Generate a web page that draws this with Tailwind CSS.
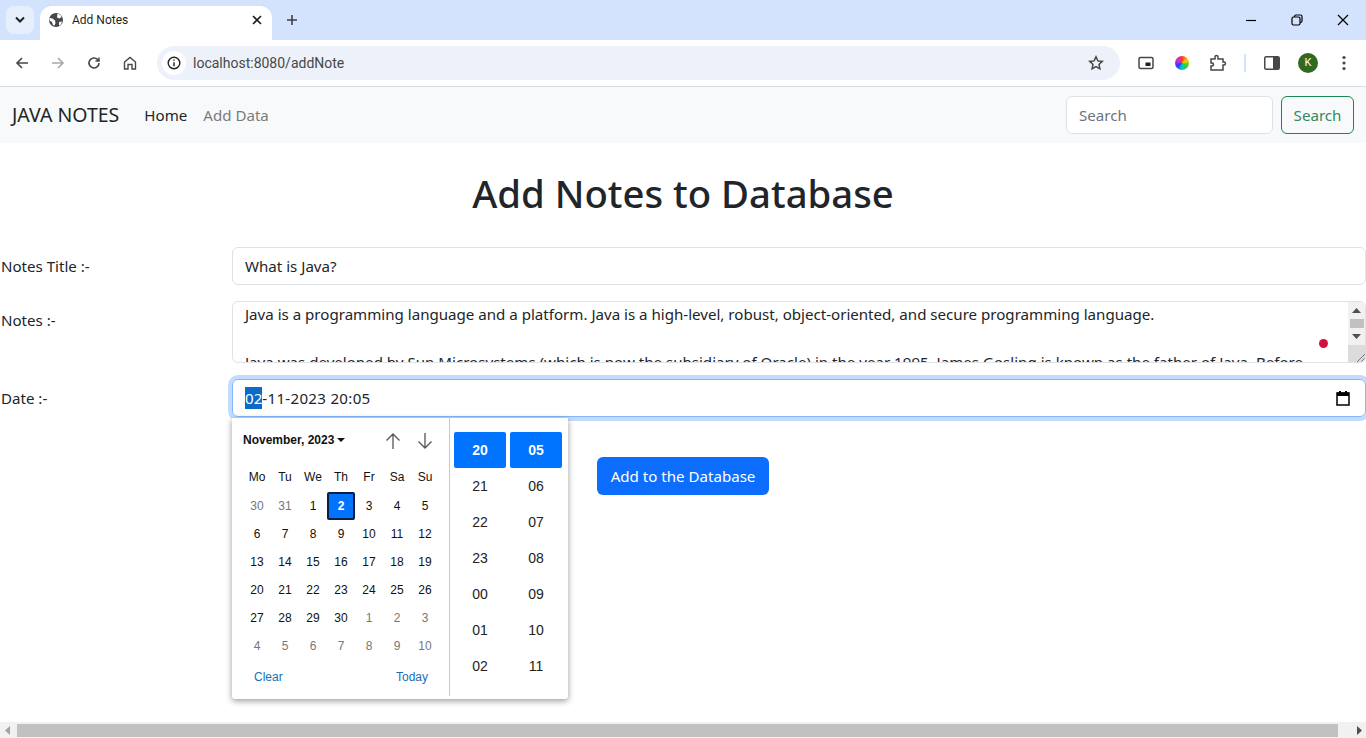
<!DOCTYPE html>
<html lang="en">
<head>
  <meta charset="UTF-8" />
  <meta name="viewport" content="width=device-width, initial-scale=1.0"/>
  <title>Add Notes</title>
  <script src="https://cdn.jsdelivr.net/npm/@tailwindcss/browser@4"></script>
</head>
<body class="h-[738px] overflow-hidden bg-white text-[15.100px] text-[#212529] font-['Noto_Sans',sans-serif]">
  <div class="flex h-[738px] flex-col">

    <!-- tab strip -->
    <div class="flex h-10 items-end bg-[#d3e3fd]">
      <div class="ml-[6px] mb-[6px] flex h-7 w-7 items-center justify-center rounded-lg bg-[#e7effd]">
        <svg width="12" height="8" viewBox="0 0 12 8" fill="none" stroke="#1f1f1f" stroke-width="2"><path d="M2 1.500l4 4 4-4"/></svg>
      </div>
      <div class="ml-[6px] flex h-[34px] w-[232px] items-center rounded-t-xl bg-white pr-[10px] pb-[6px] pl-[9px]">
        <svg width="14" height="14" viewBox="0 0 14 14"><circle cx="7" cy="7" r="7" fill="#45474a"/><path d="M8.500.5l3 1.500 1 2-2 1.500L8 4.500zM.5 5l3 .5 2.500 2 .5 2.500-1 2.500-1.500-.5L3 9 .5 7.500zM10 9l3-.5-1 3-2 1z" fill="#fff"/></svg>
        <span class="ml-[9px] flex-1 font-['Roboto',sans-serif] text-xs text-[#1f1f1f]">Add Notes</span>
        <svg width="10" height="10" viewBox="0 0 10 10" stroke="#1f1f1f" stroke-width="1.600"><path d="M1 1l8 8M9 1l-8 8"/></svg>
      </div>
      <svg class="mb-[14px] ml-[14px]" width="12" height="12" viewBox="0 0 12 12" stroke="#3c4043" stroke-width="1.600"><path d="M6 1v10M1 6h10"/></svg>
      <div class="mb-[14px] ml-auto flex items-center">
        <svg width="12" height="12" viewBox="0 0 12 12" stroke="#000" stroke-width="1.200"><path d="M1 6.500h10"/></svg>
        <svg class="ml-[34px]" width="12" height="12" viewBox="0 0 12 12" fill="none" stroke="#000" stroke-width="1.200"><rect x="1" y="3" width="8" height="8" rx="1.500"/><path d="M3.500 3V2.500A1.500 1.500 0 0 1 5 1h4.500A1.500 1.500 0 0 1 11 2.500V7a1.500 1.500 0 0 1-1.500 1.500H9"/></svg>
        <svg class="mr-[17px] ml-[34px]" width="12" height="12" viewBox="0 0 12 12" stroke="#000" stroke-width="1.200"><path d="M1 1l10 10M11 1L1 11"/></svg>
      </div>
    </div>

    <!-- toolbar -->
    <div class="flex h-[47px] items-center border-b border-[#dadce0] bg-white">
      <svg class="ml-[15px]" width="14" height="14" viewBox="0 0 14 14" fill="none" stroke="#474747" stroke-width="1.600"><path d="M13 7H2M7 2L2 7l5 5"/></svg>
      <svg class="ml-[22px]" width="14" height="14" viewBox="0 0 14 14" fill="none" stroke="#a8a8a8" stroke-width="1.600"><path d="M1 7h11M7 2l5 5-5 5"/></svg>
      <svg class="ml-[22px]" width="14" height="14" viewBox="0 0 14 14" fill="none" stroke="#474747" stroke-width="1.600"><path d="M12 7a5 5 0 1 1-1.500-3.600L12 5"/><path d="M12 1.500V5H8.500" stroke-width="1.400"/></svg>
      <svg class="ml-[22px]" width="14" height="14" viewBox="0 0 14 14" fill="none" stroke="#474747" stroke-width="1.400"><path d="M1.500 6L7 1.500 12.500 6v7H9V8.500H5V13H1.500z"/></svg>
      <div class="ml-[20px] flex h-[34px] w-[963px] items-center rounded-full bg-[#edf2fa] pr-4 pl-[5px]">
        <div class="flex h-6 w-6 items-center justify-center rounded-full bg-white">
          <svg width="14" height="14" viewBox="0 0 14 14" fill="none" stroke="#1f1f1f" stroke-width="1.400"><circle cx="7" cy="7" r="5.800"/><path d="M7 6.200v4M7 3.500v1.300"/></svg>
        </div>
        <span class="ml-[7px] flex-1 font-['Roboto',sans-serif] text-[14px] text-[#474747]">localhost:8080/addNote</span>
        <svg width="16" height="16" viewBox="0 0 16 16" fill="none" stroke="#474747" stroke-width="1.500"><path d="M8 1.800l1.900 4.100 4.400.5-3.300 3 .9 4.400L8 11.600l-3.900 2.200.9-4.400-3.300-3 4.400-.5z"/></svg>
      </div>
      <svg class="ml-[18px]" width="16" height="14" viewBox="0 0 16 14" fill="none"><rect x="1" y="1.500" width="14" height="11" rx="1.500" stroke="#474747" stroke-width="1.500"/><rect x="7.500" y="6.500" width="5" height="3.500" fill="#1f1f1f"/></svg>
      <div class="ml-[21px] h-[14px] w-[14px] rounded-full bg-[conic-gradient(#f33,#fc0,#3c3,#0cc,#33f,#c3c,#f33)]"></div>
      <svg class="ml-[20px]" width="18" height="18" viewBox="0 0 18 18" fill="none" stroke="#474747" stroke-width="1.500"><path d="M2 5h4V3a1.500 1.500 0 0 1 3 0v2h5v3h1a1.500 1.500 0 0 1 0 3h-1v5H2v-4h1a1.500 1.500 0 0 0 0-3H2z"/></svg>
      <div class="ml-[17px] h-[18px] w-[2px] bg-[#d3e3fd]"></div>
      <svg class="ml-[18px]" width="16" height="14" viewBox="0 0 16 14"><rect x=".75" y=".75" width="14.500" height="12.500" rx="1.500" fill="none" stroke="#474747" stroke-width="1.500"/><rect x="9" y="1" width="6" height="12" fill="#474747"/></svg>
      <div class="ml-[18px] flex h-5 w-5 items-center justify-center rounded-full bg-[#33691e] font-['Roboto',sans-serif] text-[11px] text-white">K</div>
      <svg class="ml-[24px]" width="4" height="16" viewBox="0 0 4 16" fill="#474747"><circle cx="2" cy="2.500" r="1.600"/><circle cx="2" cy="8" r="1.600"/><circle cx="2" cy="13.500" r="1.600"/></svg>
    </div>

    <!-- navbar -->
    <nav class="flex h-14 items-center bg-[#f8f9fa] pr-3 pl-3">
      <span class="text-[19.500px] text-[#212529]">JAVA NOTES</span>
      <span class="ml-[25px] text-[#212529]">Home</span>
      <span class="ml-4 text-[#7a7b7c]">Add Data</span>
      <div class="ml-auto flex h-[38px] w-[207px] items-center rounded-md border border-[#dee2e6] bg-white px-3 text-[#6c757d]">Search</div>
      <div class="ml-2 flex h-[38px] w-[73px] items-center justify-center rounded-md border border-[#198754] text-[#2f8a62]">Search</div>
    </nav>

    <!-- page -->
    <main class="relative flex-1">
      <h1 class="mt-5 h-[61px] text-center text-[38.300px] leading-[60px] font-medium text-[#212529]">Add Notes to Database</h1>
      <div class="mt-[23px] flex h-[38px] items-center">
        <label class="w-[232px] pl-px">Notes Title :-</label>
        <div class="flex h-[38px] flex-1 items-center rounded-md border border-[#dee2e6] px-3">What is Java?</div>
      </div>
      <div class="relative mt-4 flex h-[62px]">
        <label class="w-[232px] pt-2 pl-px">Notes :-</label>
        <div class="flex h-[62px] flex-1 overflow-hidden rounded-md border border-[#dee2e6]">
          <div class="flex-1 overflow-hidden px-3 leading-6 whitespace-nowrap">
            <p>Java is a programming language and a platform. Java is a high-level, robust, object-oriented, and secure programming language.</p>
            <p class="mt-6">Java was developed by Sun Microsystems (which is now the subsidiary of Oracle) in the year 1995. James Gosling is known as the father of Java. Before</p>
          </div>
          <div class="flex w-[17px] flex-col items-center bg-[#f1f1f1]">
            <svg class="mt-[6px]" width="9" height="5" viewBox="0 0 9 5" fill="#505050"><path d="M4.500 0L9 5H0z"/></svg>
            <div class="mt-[6px] h-[9px] w-[14px] bg-[#c1c1c1]"></div>
            <svg class="mt-[6px]" width="9" height="5" viewBox="0 0 9 5" fill="#505050"><path d="M0 0h9L4.500 5z"/></svg>
            <div class="mt-auto flex h-[17px] w-full items-end justify-end bg-[#dcdcdc]">
              <svg width="10" height="10" viewBox="0 0 10 10" stroke="#777"><path d="M2 10l8-8M6 10l4-4"/></svg>
            </div>
          </div>
        </div>
        <span class="absolute top-[38px] left-[1319px] h-[9px] w-[9px] rounded-full bg-[#d01140]"></span>
      </div>
      <div class="mt-4 flex h-[38px] items-center">
        <label class="w-[232px] pl-px">Date :-</label>
        <div class="flex h-[38px] flex-1 items-center rounded-md border border-[#86b7fe] px-3 shadow-[0_0_0_4px_#c2dbfe]">
          <span class="bg-[#0b6bc7] text-white">02</span><span class="tracking-[0.3px]">-11-2023 20:05</span>
          <svg class="mr-[3px] ml-auto" width="14" height="16" viewBox="0 0 14 16"><path d="M1 3h12v12H1z" fill="#fff" stroke="#000" stroke-width="1.500"/><path d="M1 2.500h12V6H1zM3 1h2v2H3zM9 1h2v2H9z" fill="#000"/></svg>
        </div>
      </div>
      <div class="mt-10 flex justify-center">
        <div class="flex h-[38px] w-[172px] items-center justify-center rounded-md bg-[#0d6efd] text-white">Add to the Database</div>
      </div>

      <!-- date picker popup -->
      <div class="absolute top-[275px] left-[232px] flex h-[281px] w-[336px] rounded-b-[3px] bg-white font-['Liberation_Sans',sans-serif] text-xs text-[#111] shadow-[0_2px_6px_rgba(0,0,0,0.4)]">
        <div class="w-[217px] pl-[11px]">
          <div class="flex h-[44px] items-center">
            <span class="font-bold">November, 2023</span>
            <svg class="ml-[3px]" width="8" height="4" viewBox="0 0 8 4" fill="#111"><path d="M0 0h8L4 4z"/></svg>
            <svg class="mt-[2px] ml-[40px]" width="16" height="18" viewBox="0 0 16 18" fill="none" stroke="#555" stroke-width="1.300"><path d="M8 17V2M1.500 8.500L8 2l6.500 6.500"/></svg>
            <svg class="mt-[2px] ml-4" width="16" height="18" viewBox="0 0 16 18" fill="none" stroke="#555" stroke-width="1.300"><path d="M8 1v15M1.500 9.500L8 16l6.500-6.500"/></svg>
          </div>
          <div class="grid grid-cols-[repeat(7,28px)] grid-rows-[30px_repeat(6,28px)] items-center justify-items-center">
            <span>Mo</span><span>Tu</span><span>We</span><span>Th</span><span>Fr</span><span>Sa</span><span>Su</span>
            <span class="text-[#777]">30</span><span class="text-[#777]">31</span><span>1</span><span class="flex h-7 w-7 items-center justify-center rounded-[2px] border-2 border-[#0a1f3f] bg-[#0073ff] font-bold text-white">2</span><span>3</span><span>4</span><span>5</span>
            <span>6</span><span>7</span><span>8</span><span>9</span><span>10</span><span>11</span><span>12</span>
            <span>13</span><span>14</span><span>15</span><span>16</span><span>17</span><span>18</span><span>19</span>
            <span>20</span><span>21</span><span>22</span><span>23</span><span>24</span><span>25</span><span>26</span>
            <span>27</span><span>28</span><span>29</span><span>30</span><span class="text-[#777]">1</span><span class="text-[#777]">2</span><span class="text-[#777]">3</span>
            <span class="text-[#777]">4</span><span class="text-[#777]">5</span><span class="text-[#777]">6</span><span class="text-[#777]">7</span><span class="text-[#777]">8</span><span class="text-[#777]">9</span><span class="text-[#777]">10</span>
          </div>
          <div class="mt-[9px] flex justify-between pr-[21px] pl-[11px] text-[#1a6fb5]"><span>Clear</span><span>Today</span></div>
        </div>
        <div class="mb-[3px] w-px bg-[#c8c8c8]"></div>
        <div class="grid h-[266px] auto-rows-[36px] grid-cols-[52px_52px] items-center justify-items-center gap-x-1 pt-[14px] pl-1 text-sm text-[#222]">
          <span class="flex h-9 w-[52px] items-center justify-center rounded-[2px] bg-[#0073ff] font-bold text-white">20</span>
          <span class="flex h-9 w-[52px] items-center justify-center rounded-[2px] bg-[#0073ff] font-bold text-white">05</span>
          <span>21</span><span>06</span>
          <span>22</span><span>07</span>
          <span>23</span><span>08</span>
          <span>00</span><span>09</span>
          <span>01</span><span>10</span>
          <span>02</span><span>11</span>
        </div>
      </div>
    </main>

    <!-- horizontal page scrollbar -->
    <div class="flex h-4 items-center bg-[#f1f1f1]">
      <svg class="ml-[5px]" width="5" height="9" viewBox="0 0 5 9" fill="#a3a3a3"><path d="M5 0v9L0 4.500z"/></svg>
      <div class="ml-[7px] h-[13px] w-[1321px] bg-[#c1c1c1]"></div>
      <svg class="ml-[19px]" width="5" height="9" viewBox="0 0 5 9" fill="#505050"><path d="M0 0v9l5-4.500z"/></svg>
    </div>
  </div>
</body>
</html>
